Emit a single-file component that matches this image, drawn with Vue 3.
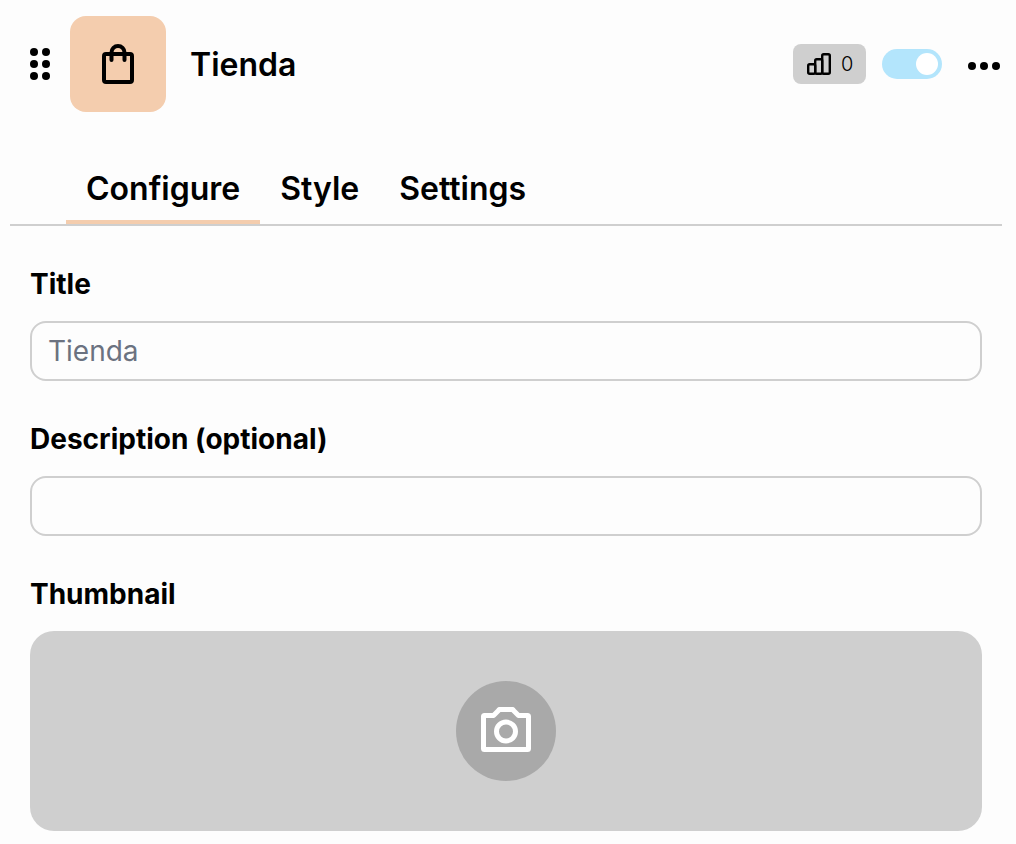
<script setup>
import { ref } from "vue";

const tabs = ["Configure", "Style", "Settings"];
const active = ref("Configure");
const title = ref("");
const description = ref("");
const enabled = ref(true);
</script>

<template>
  <div class="panel">
    <!-- header -->
    <header class="head">
      <svg class="drag" viewBox="0 0 20 32" fill="#000">
        <circle cx="4" cy="4" r="4" />
        <circle cx="16" cy="4" r="4" />
        <circle cx="4" cy="16" r="4" />
        <circle cx="16" cy="16" r="4" />
        <circle cx="4" cy="28" r="4" />
        <circle cx="16" cy="28" r="4" />
      </svg>
      <div class="thumb">
        <svg viewBox="0 0 32 40" fill="none" stroke="#000" stroke-width="4" stroke-linecap="round" stroke-linejoin="round">
          <rect x="2" y="10" width="28" height="28" rx="2" />
          <path d="M9.500 16V8.500a6.500 6.500 0 0 1 13 0V16" />
        </svg>
      </div>
      <span class="name">Tienda</span>
      <div class="actions">
        <div class="stats">
          <svg viewBox="0 0 24 22" fill="none" stroke="#000" stroke-width="2.400" stroke-linejoin="round">
            <rect x="1.200" y="11.200" width="7" height="9.600" rx="1.500" />
            <rect x="8.200" y="6.200" width="7" height="14.600" rx="1.500" />
            <rect x="15.200" y="1.200" width="7.600" height="19.600" rx="1.500" />
          </svg>
          <span>0</span>
        </div>
        <button type="button" class="toggle" :class="{ on: enabled }" @click="enabled = !enabled">
          <span class="knob"></span>
        </button>
        <svg class="more" viewBox="0 0 32 8" fill="#000">
          <circle cx="4" cy="4" r="4" />
          <circle cx="16" cy="4" r="4" />
          <circle cx="28" cy="4" r="4" />
        </svg>
      </div>
    </header>

    <!-- tabs -->
    <nav class="tabs">
      <button
        v-for="t in tabs"
        :key="t"
        type="button"
        class="tab"
        :class="{ active: active === t }"
        @click="active = t"
      >
        {{ t }}
      </button>
    </nav>

    <!-- form -->
    <div class="form">
      <label class="field">
        <span class="label">Title</span>
        <input v-model="title" type="text" class="input" placeholder="Tienda" />
      </label>
      <label class="field">
        <span class="label">Description (optional)</span>
        <input v-model="description" type="text" class="input" />
      </label>
      <div class="field">
        <span class="label">Thumbnail</span>
        <div class="upload">
          <div class="upload-btn">
            <svg viewBox="0 0 50 45" fill="none" stroke="#fff" stroke-width="5" stroke-linejoin="round">
              <path d="M2.500 9.500a1 1 0 0 1 1-1H12.500l5-5a1.500 1.500 0 0 1 1-1h13a1.500 1.500 0 0 1 1 1l5 5h9a1 1 0 0 1 1 1v32a1 1 0 0 1-1 1h-43a1 1 0 0 1-1-1z" />
              <circle cx="25" cy="24.500" r="9.500" />
            </svg>
          </div>
        </div>
      </div>
    </div>
  </div>
</template>

<style>
html,
body {
  margin: 0;
  background: #fdfdfd;
}
</style>

<style scoped>
.panel {
  width: 1016px;
  height: 844px;
  overflow: hidden;
  box-sizing: border-box;
  padding: 16px 14px 0 10px;
  font-family: Inter, "Liberation Sans", sans-serif;
  font-optical-sizing: none;
  color: #000;
  background: #fdfdfd;
}

/* header */
.head {
  display: flex;
  align-items: center;
  height: 96px;
  padding-left: 20px;
}

.drag {
  width: 20px;
  height: 32px;
  margin-right: 20px;
}

.thumb {
  display: grid;
  place-items: center;
  width: 96px;
  height: 96px;
  border-radius: 16px;
  background: #f4cdae;
}

.thumb svg {
  width: 32px;
  height: 40px;
}

.name {
  margin-left: 24px;
  font-size: 32px;
  font-weight: 600;
}

.actions {
  display: flex;
  align-items: center;
  margin-left: auto;
  margin-right: 2px;
}

.stats {
  display: flex;
  align-items: center;
  gap: 10px;
  box-sizing: border-box;
  width: 73px;
  height: 40px;
  padding-left: 14px;
  border-radius: 8px;
  background: #cfcfcf;
  font-size: 20px;
  font-weight: 350;
}

.stats svg {
  width: 24px;
  height: 22px;
}

.toggle {
  position: relative;
  width: 60px;
  height: 30px;
  margin-left: 16px;
  padding: 0;
  border: none;
  border-radius: 15px;
  background: #ddd;
}

.toggle.on {
  background: #b3e5fc;
}

.knob {
  position: absolute;
  top: 4px;
  left: 4px;
  width: 22px;
  height: 22px;
  border-radius: 50%;
  background: #fff;
}

.toggle.on .knob {
  left: 34px;
}

.more {
  width: 32px;
  height: 8px;
  margin-top: 4px;
  margin-left: 26px;
}

/* tabs */
.tabs {
  display: flex;
  height: 64px;
  margin-top: 48px;
  padding-left: 56px;
  border-bottom: 2px solid #cfcfcf;
}

.tab {
  height: 64px;
  padding: 0 20px 4px;
  border: none;
  border-bottom: 4px solid transparent;
  background: transparent;
  font-family: inherit;
  font-optical-sizing: none;
  font-size: 32px;
  font-weight: 600;
  color: #000;
}

.tab.active {
  border-bottom-color: #f4cdae;
}

/* form */
.form {
  display: flex;
  flex-direction: column;
  gap: 40px;
  margin-top: 40px;
  padding: 0 20px;
}

.field {
  display: flex;
  flex-direction: column;
  gap: 20px;
}

.label {
  font-size: 28px;
  font-weight: 700;
  line-height: 36px;
  margin-bottom: -1px;
}

.input {
  box-sizing: border-box;
  width: 100%;
  height: 60px;
  padding: 0 16px;
  border: 2px solid #cfcfcf;
  border-radius: 16px;
  outline: none;
  background: #fdfdfd;
  font-family: inherit;
  font-optical-sizing: none;
  font-size: 28px;
  color: #000;
}

.input::placeholder {
  color: #6b7280;
  opacity: 1;
}

.upload {
  display: grid;
  place-items: center;
  height: 200px;
  border-radius: 24px;
  background: #cfcfcf;
}

.upload-btn {
  display: grid;
  place-items: center;
  width: 100px;
  height: 100px;
  border-radius: 50%;
  background: #a9a9a9;
}

.upload-btn svg {
  width: 50px;
  height: 45px;
  margin-bottom: 4px;
}
</style>
